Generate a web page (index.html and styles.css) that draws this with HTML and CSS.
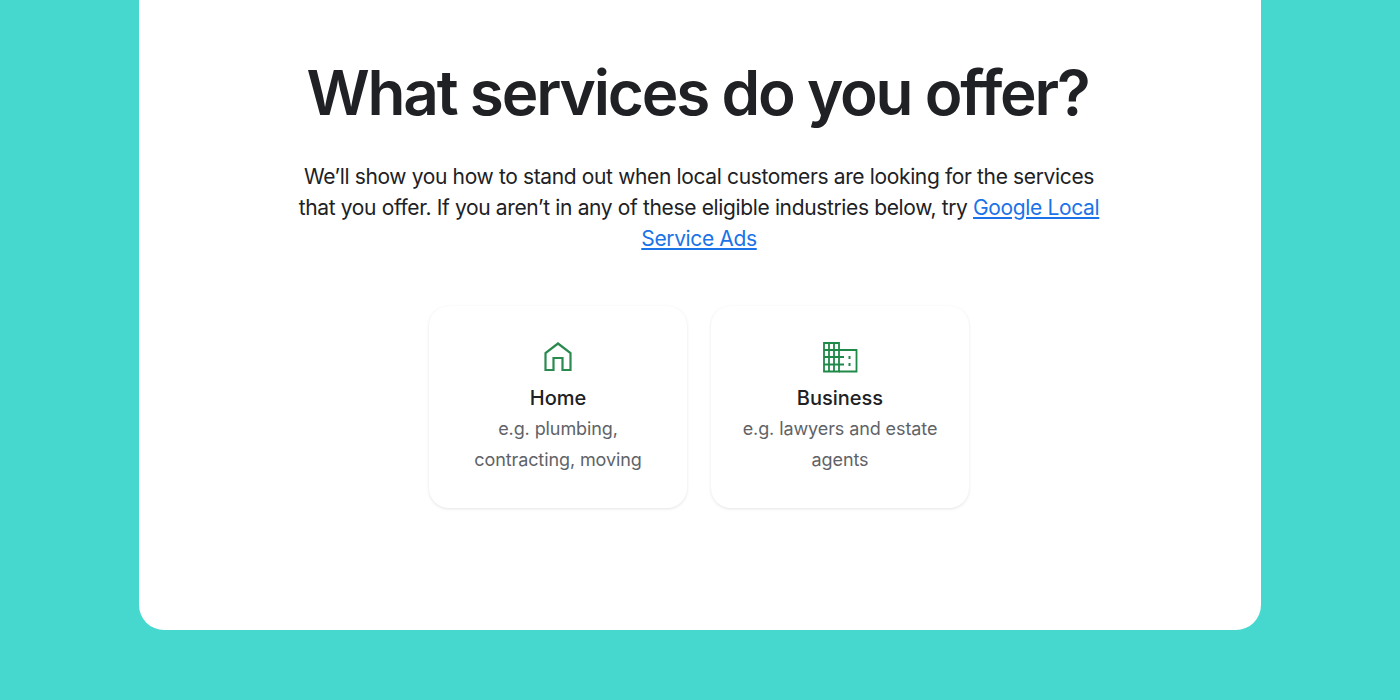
FILE: index.html
```html
<!DOCTYPE html>
<html lang="en">
<head>
  <meta charset="UTF-8">
  <title>What services do you offer?</title>
  <link rel="stylesheet" href="styles.css">
</head>
<body>
  <div class="panel">
    <h1>What services do you offer?</h1>
    <p class="intro">We’ll show you how to stand out when local customers are looking for the services<br>that you offer. If you aren’t in any of these eligible industries below, try <a href="#">Google Local<br>Service Ads</a></p>

    <div class="cards">
      <div class="card">
        <svg class="icon" width="30" height="32" viewBox="0 0 30 32" fill="none" stroke="#2a8a50" stroke-width="2.2">
          <path d="M2.5 29V12L15 2.5L27.5 12V29H19.5V17H10.5V29Z"/>
        </svg>
        <div class="card-title">Home</div>
        <div class="card-text">e.g. plumbing,<br>contracting, moving</div>
      </div>
      <div class="card">
        <svg class="icon" width="36" height="32" viewBox="0 0 36 32" fill="none" stroke="#1f8a48" stroke-width="1.8">
          <path d="M2 2H17V30.5H2Z"/>
          <path d="M2 9H22M2 16H22M2 23.5H22M7 2V30.5M12 2V30.5"/>
          <path d="M17 9H34.5V30.5H17"/>
          <path d="M27.5 15V18M27.5 22V25" stroke-width="2"/>
        </svg>
        <div class="card-title">Business</div>
        <div class="card-text">e.g. lawyers and estate<br>agents</div>
      </div>
    </div>
  </div>
</body>
</html>
```

FILE: styles.css
```css
* {
  margin: 0;
  padding: 0;
  box-sizing: border-box;
}

body {
  height: 700px;
  overflow: hidden;
  background: #46d8cf;
  font-family: Inter, Roboto, sans-serif;
}

.panel {
  width: 1122px;
  height: 630px;
  margin-left: 139px;
  padding-top: 57px;
  padding-right: 2px;
  background: white;
  border-radius: 0 0 25px 25px;
  text-align: center;
}

h1 {
  padding-right: 3px;
  font-size: 62px;
  line-height: 72px;
  font-weight: 600;
  letter-spacing: -2.2px;
  color: #202124;
}

.intro {
  margin-top: 32px;
  font-size: 21px;
  line-height: 31px;
  letter-spacing: -0.36px;
  color: #202124;
}

.intro a {
  color: #1a73e8;
}

.cards {
  display: flex;
  justify-content: center;
  gap: 24px;
  margin-top: 52px;
}

.card {
  width: 258px;
  height: 202px;
  padding-top: 35px;
  background: white;
  border-radius: 20px;
  box-shadow: 0 1px 3px rgba(60, 64, 67, 0.14);
}

.icon {
  display: block;
  margin: 0 auto;
}

.card-title {
  margin-top: 10px;
  font-size: 20px;
  line-height: 30px;
  font-weight: 500;
  color: #202124;
}

.card-text {
  font-size: 18px;
  line-height: 31px;
  letter-spacing: -0.1px;
  color: #5f6368;
}
```
